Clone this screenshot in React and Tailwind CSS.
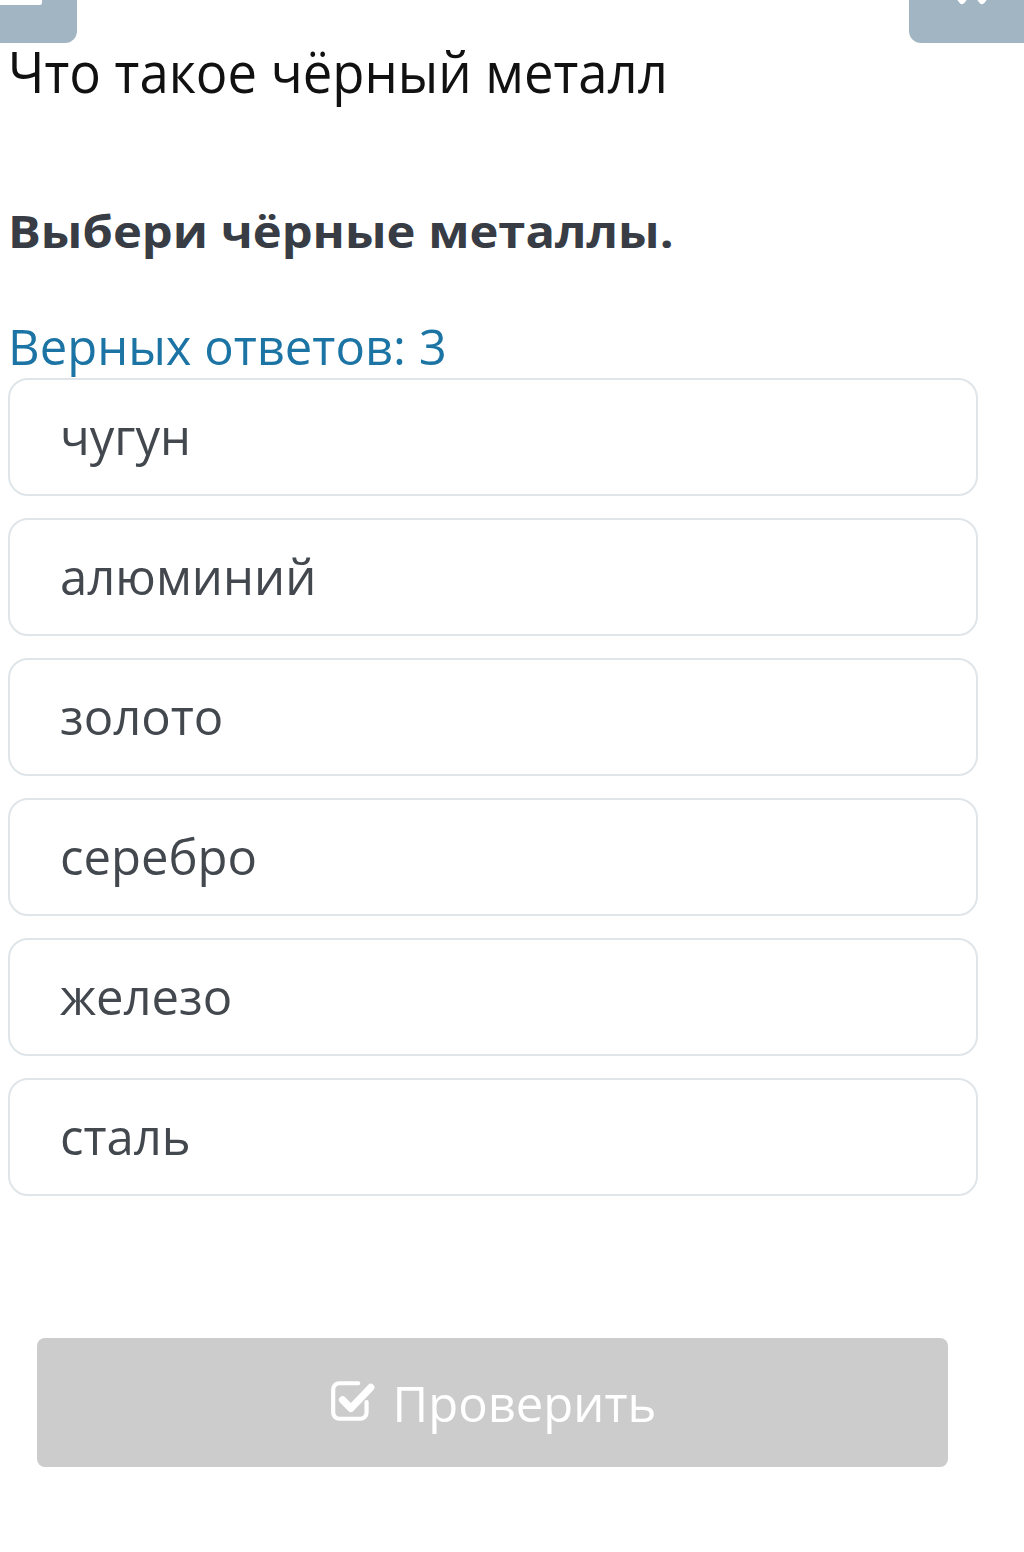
import React from "react";

const options = ["чугун", "алюминий", "золото", "серебро", "железо", "сталь"];

export default function App() {
  return (
    <div className="relative w-[1024px] h-[1552px] bg-white overflow-hidden" style={{ fontFamily: '"Open Sans", "Noto Sans", sans-serif' }}>
      {/* top partial buttons */}
      <div className="flex justify-between h-[43px]">
        <div className="relative w-[77px] h-[43px] bg-[#a1b5c3] rounded-br-[12px] overflow-hidden">
          <div className="absolute left-0 top-0 w-[42px] h-[5px] bg-white rounded-br-[2px]" />
        </div>
        <div className="relative w-[115px] h-[43px] bg-[#a1b5c3] rounded-bl-[12px] overflow-hidden">
          <svg className="absolute left-[40px] top-0" width="46" height="8" viewBox="0 14 46 8">
            <path d="M4 4 L13 15 L22 4 M24 4 L33 15 L42 4" stroke="white" strokeWidth="6" fill="none" strokeLinecap="round" strokeLinejoin="round" />
          </svg>
        </div>
      </div>

      <div className="px-[8px]">
        <h1 className="w-fit -mt-[4px] text-[56px] leading-[64px] text-[#111] font-normal scale-x-[0.94] origin-left whitespace-nowrap">Что такое чёрный металл</h1>
        <h2 className="w-fit mt-[100px] text-[45px] leading-[56px] font-bold text-[#383c44] scale-x-[1.087] origin-left whitespace-nowrap">Выбери чёрные металлы.</h2>
        <div className="mt-[58px] text-[49px] leading-[58px] text-[#1b74a4] whitespace-nowrap">Верных ответов: 3</div>

        <div className="mt-[3px] flex flex-col gap-[22px] w-[970px]">
          {options.map((o) => (
            <div key={o} className="h-[118px] rounded-[20px] border-2 border-[#dfe5e8] bg-white flex items-center pl-[50px]">
              <span className="text-[49px] leading-[56px] text-[#43484e] -mt-[3px]">{o}</span>
            </div>
          ))}
        </div>
      </div>

      <div className="mt-[142px] ml-[37px] w-[911px] h-[129px] bg-[#cccccc] rounded-[8px] flex items-center justify-center gap-[16px]">
        <svg width="48" height="48" viewBox="0 0 46 46" className="mt-[-4px]">
          <path d="M36 24 V34 a6 6 0 0 1 -6 6 H10 a6 6 0 0 1 -6 -6 V12 a6 6 0 0 1 6 -6 H28" stroke="white" strokeWidth="4" fill="none" strokeLinecap="round" />
          <path d="M13 22 L21 30 L40 10" stroke="white" strokeWidth="7" fill="none" strokeLinecap="round" strokeLinejoin="round" />
        </svg>
        <span className="text-[49px] leading-[60px] text-white">Проверить</span>
      </div>
    </div>
  );
}
